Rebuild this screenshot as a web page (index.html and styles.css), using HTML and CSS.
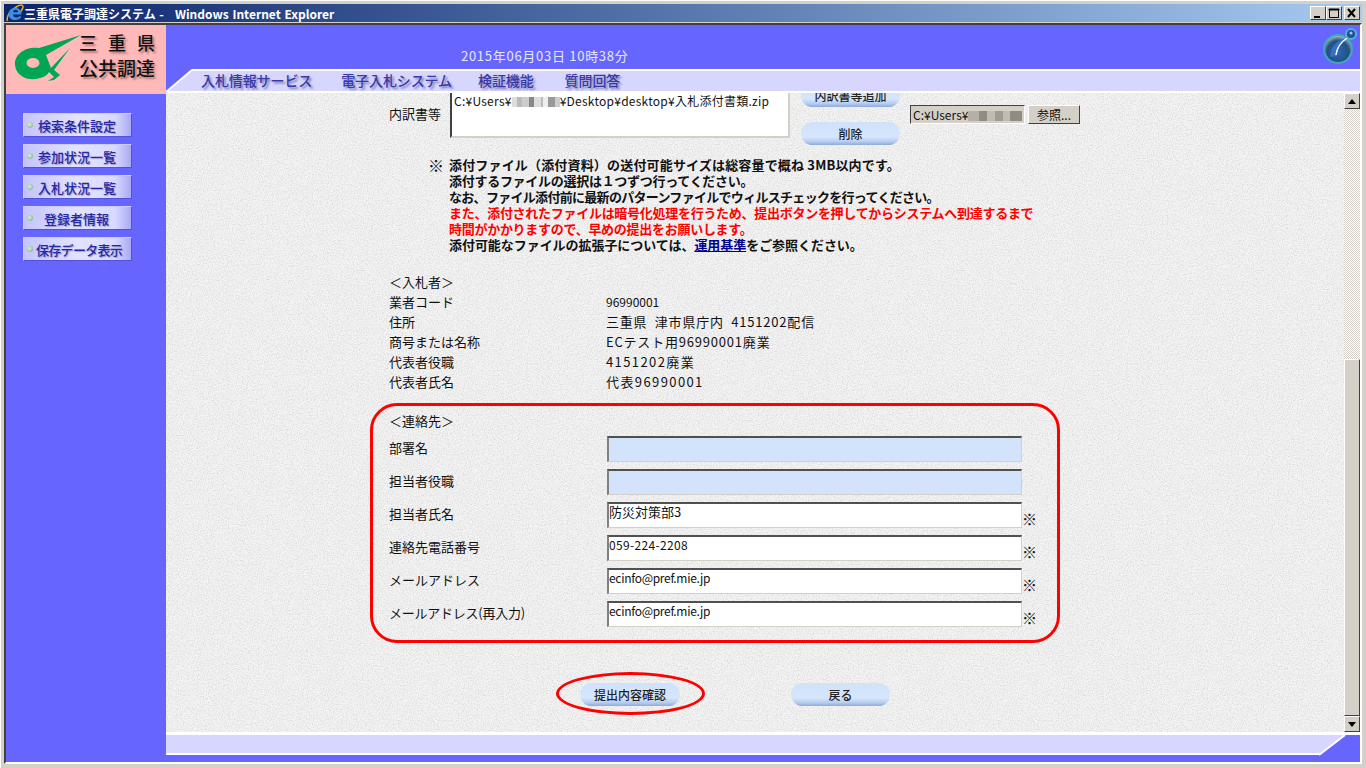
FILE: index.html
```html
<!DOCTYPE html>
<html lang="ja">
<head>
<meta charset="utf-8">
<title>三重県電子調達システム</title>
<link rel="stylesheet" href="styles.css">
</head>
<body>
<div class="window">
  <header class="titlebar">
    <svg class="ie" width="18" height="18" viewBox="0 0 18 18"><path d="M1.500 17C0 13 4 6 11 2.500c3.500-2 6-2 6 .5 0 1.500-1 3-2.500 5" fill="none" stroke="#e8a91c" stroke-width="1.600"/><path d="M2.500 10a6.500 6.500 0 0 1 13 .5H7c0 3.500 4.500 4 6.500 1.500l2 1c-3.500 5-13 3.500-13-2.500zM7 8.300h5c0-3.300-4.500-3.300-5 0z" fill="#3d8fe6"/></svg>
    <span class="title-text">三重県電子調達システム&nbsp;-&nbsp;&nbsp; Windows Internet Explorer</span>
    <div class="winbtns">
      <span class="winbtn"><svg width="14" height="12" viewBox="0 0 14 12"><rect x="3" y="9" width="6" height="2" fill="#000"/></svg></span><span class="winbtn"><svg width="14" height="12" viewBox="0 0 14 12"><path d="M2.500 2.500h9v8h-9z M2 2h10v1H2z" fill="none" stroke="#000"/></svg></span><span class="winbtn winbtn-close"><svg width="14" height="12" viewBox="0 0 14 12"><path d="M3 2l7 8M10 2l-7 8" stroke="#000" stroke-width="2"/></svg></span>
    </div>
  </header>
  <div class="client">
    <aside class="side">
      <div class="logo">
        <svg class="logo-mark" width="72" height="50" viewBox="10 31 72 50">
          <path d="M79 33 L37 46 C24 44 12 52 13 63 C14 74 26 80 38 76 C43 75 46 72 47 70 L52 75 L46 79 L52 78 L58 73 L52 68 L68 46 L49 66 L44 53 Z" fill="#00a651"/>
          <ellipse cx="31" cy="61" rx="6.500" ry="5" fill="#ffb9b9"/>
        </svg>
        <div class="logo-text"><span class="logo-top">三重県</span><span class="logo-bot">公共調達</span></div>
      </div>
      <nav class="sidenav">
        <a class="sidebtn"><i class="dot"></i><span>検索条件設定</span></a>
        <a class="sidebtn"><i class="dot"></i><span>参加状況一覧</span></a>
        <a class="sidebtn"><i class="dot"></i><span>入札状況一覧</span></a>
        <a class="sidebtn sidebtn-wide"><i class="dot"></i><span>登録者情報</span></a>
        <a class="sidebtn sidebtn-tight"><i class="dot"></i><span>保存データ表示</span></a>
      </nav>
    </aside>
    <div class="main">
      <div class="banner">
        <span class="date">2015年06月03日 10時38分</span>
        <svg class="orb" width="34" height="40" viewBox="0 0 34 40">
          <defs>
            <radialGradient id="orbg" cx=".5" cy=".6" r=".6"><stop offset="0" stop-color="#2a68b8"/><stop offset=".65" stop-color="#25507f"/><stop offset=".85" stop-color="#6f95a5"/><stop offset="1" stop-color="#c8dde2"/></radialGradient>
          </defs>
          <circle cx="15" cy="24" r="14" fill="url(#orbg)" stroke="#3fa7c4" stroke-width="2"/>
          <path d="M7 32c1-10 6-17 17-19-6 5-9 11-10 18z" fill="#2f72c8"/>
          <path d="M13 30c1-8 5-13 11-17" fill="none" stroke="#fff" stroke-width="1.500"/>
          <circle cx="28" cy="9" r="5" fill="#1f4fa0" stroke="#4fb3d0" stroke-width="2"/>
          <circle cx="28" cy="8" r="1.500" fill="#a8c8f0"/>
        </svg>
      </div>
      <div class="tabs">
        <svg class="tab-notch" width="26" height="24" viewBox="0 0 26 24"><path d="M0 24V0h26z" fill="#6666ff"/><path d="M0 23L26 1" stroke="#fff" stroke-width="2"/></svg>
        <a class="tab tab-1">入札情報サービス</a>
        <a class="tab tab-2">電子入札システム</a>
        <a class="tab tab-3">検証機能</a>
        <a class="tab tab-4">質問回答</a>
      </div>
      <div class="viewport">
        <div class="doc">
          <section class="attach">
            <span class="attach-label">内訳書等</span>
            <div class="listbox">C:¥Users¥<i class="mosaic"></i>¥Desktop¥desktop¥入札添付書類.zip</div>
            <div class="attach-btns">
              <a class="pill pill-clip">内訳書等追加</a>
              <a class="pill">削除</a>
            </div>
            <div class="fileinput">C:¥Users¥<i class="mosaic mosaic-s"></i></div>
            <a class="browse">参照...</a>
          </section>
          <section class="notes">
            <span class="notes-mark">※</span>
            <div class="notes-body">
              <p class="ls-wide">添付ファイル（添付資料）の送付可能サイズは総容量で概ね 3MB以内です。</p>
              <p>添付するファイルの選択は１つずつ行ってください。</p>
              <p class="ls-narrow">なお、ファイル添付前に最新のパターンファイルでウィルスチェックを行ってください。</p>
              <p class="red">また、添付されたファイルは暗号化処理を行うため、提出ボタンを押してからシステムへ到達するまで</p>
              <p class="red">時間がかかりますので、早めの提出をお願いします。</p>
              <p class="ls-mid">添付可能なファイルの拡張子については、<a class="link">運用基準</a>をご参照ください。</p>
            </div>
          </section>
          <section class="bidder">
            <div class="heading">＜入札者＞</div>
            <dl class="info">
              <dt>業者コード</dt><dd class="small">96990001</dd>
              <dt>住所</dt><dd>三重県&nbsp; 津市県庁内&nbsp; 4151202配信</dd>
              <dt>商号または名称</dt><dd>ECテスト用96990001廃業</dd>
              <dt>代表者役職</dt><dd class="spaced">4151202廃業</dd>
              <dt>代表者氏名</dt><dd class="spaced">代表96990001</dd>
            </dl>
          </section>
          <section class="contact">
            <div class="heading">＜連絡先＞</div>
            <div class="form">
              <label class="row"><span class="lbl">部署名</span><input class="field field-opt" value=""></label>
              <label class="row"><span class="lbl">担当者役職</span><input class="field field-opt" value=""></label>
              <label class="row"><span class="lbl">担当者氏名</span><input class="field field-name" value="防災対策部3"><span class="req">※</span></label>
              <label class="row"><span class="lbl">連絡先電話番号</span><input class="field field-tel" value="059-224-2208"><span class="req">※</span></label>
              <label class="row"><span class="lbl">メールアドレス</span><input class="field field-mail" value="ecinfo@pref.mie.jp"><span class="req">※</span></label>
              <label class="row"><span class="lbl lbl-tight">メールアドレス(再入力)</span><input class="field field-mail" value="ecinfo@pref.mie.jp"><span class="req">※</span></label>
            </div>
          </section>
          <section class="actions">
            <a class="pill pill-circled">提出内容確認</a>
            <a class="pill">戻る</a>
          </section>
        </div>
        <div class="scrollbar">
          <span class="sb-btn"><svg width="8" height="5" viewBox="0 0 8 5"><path d="M4 0l4 5H0z"/></svg></span>
          <span class="sb-track"></span>
          <span class="sb-thumb"></span>
          <span class="sb-btn"><svg width="8" height="5" viewBox="0 0 8 5"><path d="M0 0h8L4 5z"/></svg></span>
        </div>
      </div>
      <footer class="foot">
        <svg class="foot-notch" width="41" height="27" viewBox="0 0 41 27"><path d="M0 20L26 0h15v27H0z" fill="#6666ff"/><path d="M0 20L26 0" stroke="#fff" stroke-width="2"/></svg>
      </footer>
    </div>
  </div>
</div>
</body>
</html>
```
FILE: styles.css
```css
* { box-sizing: border-box; }
*::after { box-sizing: border-box; }
html, body { margin: 0; height: 100%; overflow: hidden; }
body {
  background: #d4d0c8;
  font-family: "Noto Sans CJK JP", "Liberation Sans", sans-serif;
  font-size: 13px;
  color: #111;
}
a { text-decoration: none; cursor: default; }
p, dl, dd, dt { margin: 0; }

.window {
  width: 1366px;
  height: 768px;
  padding: 4px;
  display: flex;
  flex-direction: column;
  border-top: 1px solid #fff;
  border-left: 1px solid #fff;
}
.titlebar {
  height: 18px;
  margin-top: -1px;
  margin-left: -1px;
  flex: none;
  display: flex;
  align-items: center;
  background: linear-gradient(90deg, #0a246a 0%, #a6caf0 100%);
  color: #fff;
  padding-left: 2px;
}
.ie { flex: none; margin-right: 0; }
.title-text { font-size: 12px; font-weight: 700; white-space: nowrap; word-spacing: 1px; }
.winbtns { margin-left: auto; display: flex; padding-right: 2px; }
.winbtn {
  width: 16px;
  height: 14px;
  background: #d4d0c8;
  border: 1px solid;
  border-color: #fff #404040 #404040 #fff;
  display: flex;
  align-items: center;
  justify-content: center;
}
.winbtn-close { margin-left: 2px; }

.client {
  flex: 1;
  min-height: 0;
  margin: 1px 0 0 -1px;
  border-top: 2px solid #404040;
  border-left: 2px solid #404040;
  border-right: 2px solid #fff;
  border-bottom: 2px solid #fff;
  display: grid;
  grid-template-columns: 160px 1fr;
  background: #6666ff;
}

/* sidebar */
.side { display: flex; flex-direction: column; }
.logo {
  height: 69px;
  background: #ffb9b9;
  display: flex;
  padding: 6px 0 0 6px;
}
.logo-mark { flex: none; margin-top: 2px; }
.logo-text {
  display: flex;
  flex-direction: column;
  align-items: flex-start;
  margin-left: -5px;
  color: #111;
  font-weight: 500;
  text-shadow: 2px 2px 2px rgba(70, 40, 40, .45);
}
.logo-top { font-size: 18px; line-height: 22px; letter-spacing: 11px; white-space: nowrap; }
.logo-bot { font-size: 19px; line-height: 24px; margin-top: 3px; white-space: nowrap; }
.sidenav {
  display: flex;
  flex-direction: column;
  gap: 7px;
  padding: 19px 0 0 17px;
}
.sidebtn {
  width: 109px;
  height: 24px;
  display: flex;
  align-items: center;
  gap: 5px;
  padding-left: 3px;
  background: linear-gradient(90deg, #c4c4fb 0%, #e3e3ff 50%, #d9d9ff 85%, #a9a9f4 100%);
  border: 1px solid;
  border-color: #ccccff #5252d8 #5252d8 #ccccff;
  color: #2828a0;
  font-weight: 500;
  font-size: 13px;
  text-shadow: 1px 1px 1px rgba(90, 90, 170, .5);
  white-space: nowrap;
}
.sidebtn-wide span { margin-left: 6px; }
.sidebtn-tight { gap: 3px; letter-spacing: -.7px; }
.dot {
  flex: none;
  width: 6px;
  height: 6px;
  border-radius: 50%;
  background: radial-gradient(circle at 40% 40%, #dff0d0, #6fae7f);
}

/* header */
.main { display: flex; flex-direction: column; min-width: 0; }
.banner {
  height: 44px;
  flex: none;
  display: flex;
  align-items: flex-end;
  justify-content: space-between;
  padding: 0 3px 5px 295px;
}
.date { color: #e6e6ff; font-size: 13px; line-height: 17px; letter-spacing: .72px; white-space: nowrap; }
.orb { align-self: center; }
.tabs {
  height: 24px;
  flex: none;
  position: relative;
  display: flex;
  align-items: center;
  background: #d6d6ff;
  border-top: 2px solid #fff;
  border-bottom: 2px solid #fff;
  padding-bottom: 2px;
}
.tab-notch { position: absolute; left: 0; top: -2px; }
.tab {
  font-size: 14px;
  font-weight: 500;
  white-space: nowrap;
  color: #3838a8;
  letter-spacing: -.1px;
  text-shadow: 2px 2px 2px rgba(60, 60, 120, .55);
}
.tab-1 { margin-left: 35px; }
.tab-2 { margin-left: 29px; }
.tab-3 { margin-left: 26px; }
.tab-4 { margin-left: 31px; }

/* content */
.viewport { flex: 1; min-height: 0; display: flex; overflow: hidden; }
.doc {
  flex: 1;
  min-width: 0;
  overflow: hidden;
  display: flex;
  flex-direction: column;
  background-color: #f4f4f4;
  background-image: url("data:image/svg+xml,%3Csvg xmlns='http://www.w3.org/2000/svg' width='300' height='300'%3E%3Cfilter id='n' color-interpolation-filters='sRGB'%3E%3CfeTurbulence type='fractalNoise' baseFrequency='.8' numOctaves='2' stitchTiles='stitch'/%3E%3CfeColorMatrix values='0 0 0 0 .84 0 0 0 0 .84 0 0 0 0 .84 2 0 0 0 -.8'/%3E%3C/filter%3E%3Crect width='300' height='300' filter='url(%23n)'/%3E%3C/svg%3E");
}
.attach {
  height: 52px;
  flex: none;
  display: flex;
  align-items: flex-start;
  padding-left: 223px;
}
.attach-label { width: 61px; flex: none; line-height: 19px; margin-top: 11px; }
.listbox {
  width: 340px;
  height: 45px;
  flex: none;
  background: #fff;
  border: 2px solid;
  border-color: #404040 #d4d0c8 #d4d0c8 #404040;
  border-top: 0;
  font-size: 12px;
  line-height: 16px;
  letter-spacing: .25px;
  padding: 0 0 0 2px;
  white-space: nowrap;
  overflow: hidden;
}
.mosaic {
  display: inline-block;
  width: 48px;
  height: 10px;
  vertical-align: -1px;
  background: linear-gradient(90deg, #ddd 0 10%, #bbb 10% 20%, #ccc 20% 35%, #888 35% 45%, #ddd 45% 60%, #bbb 60% 65%, #eee 65% 75%, #999 75% 90%, #ccc 90%);
  filter: blur(.6px);
}
.mosaic-s { background: linear-gradient(90deg, #b4b0a8 0 20%, #8f8c85 20% 35%, #c0bcb4 35% 50%, #a09c94 50% 65%, #c0bcb4 65% 78%, #8f8c85 78%); width: 54px; }
.attach-btns {
  flex: none;
  margin-left: 11px;
  margin-top: -9px;
  display: flex;
  flex-direction: column;
  gap: 15px;
}
.pill {
  display: flex;
  align-items: center;
  justify-content: center;
  width: 99px;
  height: 23px;
  border-radius: 12px;
  background: linear-gradient(180deg, #cfe2fa 0%, #d5e6fd 65%, #b7cdf0 85%, #8eaadb 100%);
  color: #222;
  font-size: 12px;
  font-weight: 500;
  white-space: nowrap;
}
.fileinput {
  flex: none;
  width: 115px;
  height: 19px;
  margin: 12px 0 0 10px;
  background: #d4d0c8;
  border: 1px solid;
  border-color: #404040 #fff #fff #404040;
  font-size: 12px;
  line-height: 17px;
  padding-left: 2px;
  white-space: nowrap;
  overflow: hidden;
}
.browse {
  flex: none;
  width: 52px;
  height: 19px;
  margin: 12px 0 0 3px;
  background: #d4d0c8;
  border: 1px solid;
  border-color: #fff #404040 #404040 #fff;
  font-size: 12px;
  line-height: 17px;
  text-align: center;
}
.notes {
  flex: none;
  display: flex;
  margin: 12px 0 0 262px;
  font-weight: 700;
  font-size: 13px;
  line-height: 16px;
  letter-spacing: -.28px;
}
.notes-mark { width: 21px; flex: none; font-size: 16px; letter-spacing: 0; }
.notes-body p { white-space: nowrap; }
.notes-body .ls-wide { letter-spacing: .17px; }
.notes-body .ls-narrow { letter-spacing: -.7px; }
.notes-body .ls-mid { letter-spacing: -.05px; }
.red { color: #f00; }
.link { color: #00008b; text-decoration: underline; }
.bidder { flex: none; margin: 19px 0 0 223px; }
.heading { line-height: 20px; height: 20px; }
.info {
  display: grid;
  grid-template-columns: 217px 1fr;
  grid-auto-rows: 20px;
  line-height: 20px;
}
.info dd { font-size: 13px; letter-spacing: .8px; white-space: nowrap; }
.info dd.small { font-size: 12px; letter-spacing: 0; }
.info dd.spaced { letter-spacing: 1.4px; }
.contact {
  flex: none;
  width: 690px;
  height: 240px;
  margin: 11px 0 0 204px;
  border: 3px solid #f00;
  border-radius: 27px;
  padding: 5px 0 0 16px;
}
.form { display: flex; flex-direction: column; gap: 7px; margin-top: 5px; }
.row { display: flex; height: 26px; align-items: center; }
.lbl { width: 218px; flex: none; white-space: nowrap; margin-bottom: 4px; }
.lbl-tight { letter-spacing: -.25px; }
.field {
  width: 415px;
  height: 26px;
  flex: none;
  background: #fff;
  border: 2px solid;
  border-color: #505050 #d4d0c8 #d4d0c8 #808080;
  border-right-width: 1px;
  border-bottom-width: 1px;
  font: 12px/14px "Noto Sans CJK JP", "Liberation Sans", sans-serif;
  padding: 0 0 9px 0;
  color: #111;
  outline: 0;
  margin: 0;
}
.field-opt { background: #d3e3fc; }
.field-name { font-size: 13px; }
.field-tel { letter-spacing: .35px; }
.field-mail { letter-spacing: -.3px; }
.req { font-size: 15px; margin: 8px 0 0 0; line-height: 14px; }
.actions {
  flex: none;
  display: flex;
  gap: 111px;
  margin: 40px 0 0 414px;
}
.pill-circled { position: relative; width: 100px; }
.pill-circled::after {
  content: "";
  position: absolute;
  left: -24px;
  top: -11px;
  width: 149px;
  height: 43px;
  border: 3px solid #f00;
  border-radius: 50%;
}

/* scrollbar */
.scrollbar {
  width: 16px;
  flex: none;
  display: flex;
  flex-direction: column;
  background: #d4d0c8;
}
.sb-btn {
  flex: none;
  height: 16px;
  display: flex;
  align-items: center;
  justify-content: center;
  background: #d4d0c8;
  border: 1px solid;
  border-color: #fff #404040 #404040 #fff;
}
.sb-track {
  flex: none;
  height: 250px;
  background-color: #fff;
  background-image: conic-gradient(#d4d0c8 25%, transparent 0 50%, #d4d0c8 0 75%, transparent 0);
  background-size: 2px 2px;
}
.sb-thumb {
  flex: 1;
  background: #d4d0c8;
  border: 1px solid;
  border-color: #fff #404040 #404040 #fff;
}

/* footer */
.foot {
  height: 30px;
  flex: none;
  position: relative;
  background: linear-gradient(#fff 0 3px, #d6d6ff 3px 21px, #fff 21px 23px, #6666ff 23px);
}
.foot-notch { position: absolute; right: 0; top: 3px; height: 27px; }
```
